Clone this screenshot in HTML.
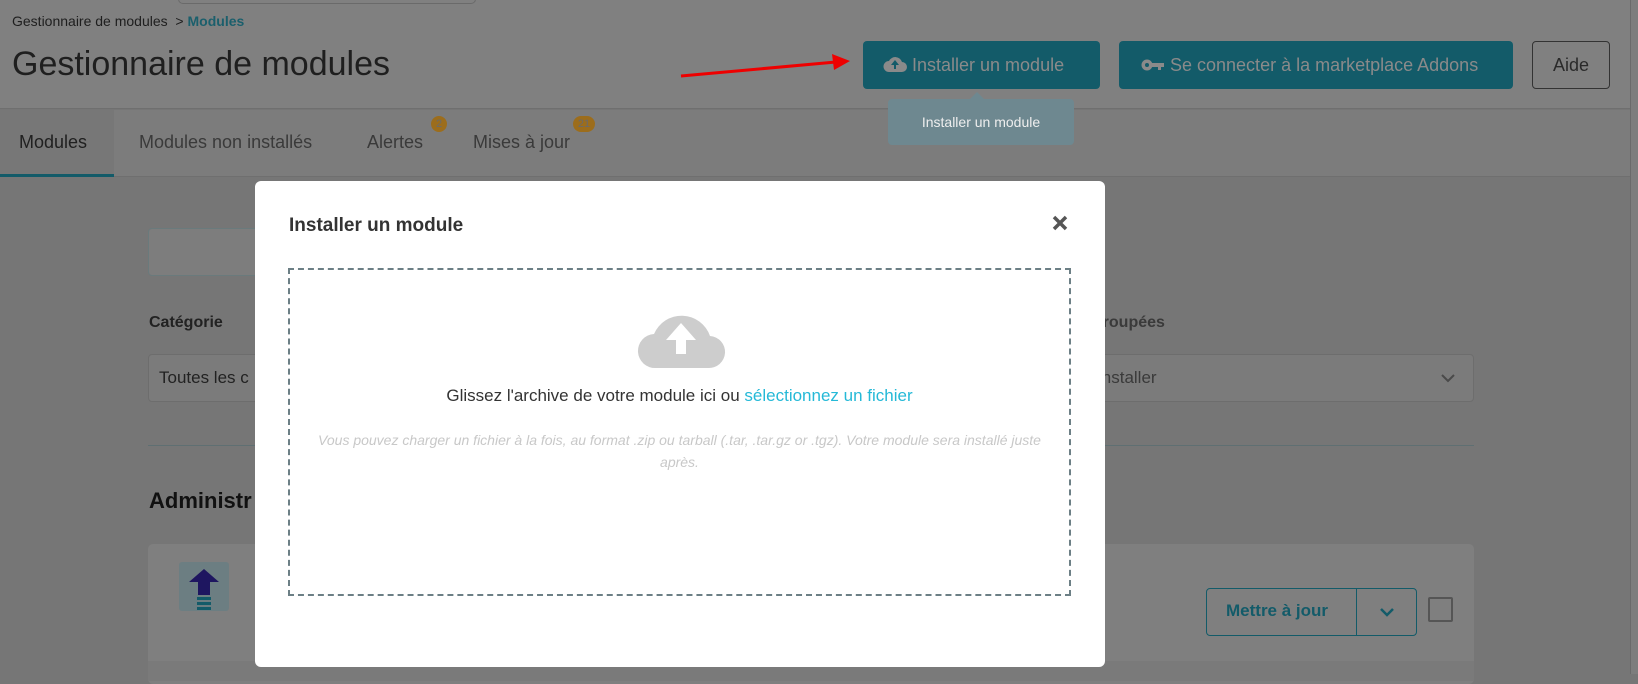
<!DOCTYPE html>
<html><head><meta charset="utf-8"><style>
*{box-sizing:border-box;margin:0;padding:0}
body{width:1638px;height:674px;overflow:hidden;background:#767676;font-family:"Liberation Sans",sans-serif;position:relative}
.a{position:absolute}
</style></head><body>
<!-- header -->
<div class="a" style="left:0;top:0;width:1630px;height:109px;background:#808080;border-bottom:1px solid #6f6f6f"></div>
<div class="a" style="left:178px;top:-6px;width:298px;height:10px;border:1px solid #6a6a6a;border-radius:6px"></div>
<div class="a" style="left:12px;top:13px;font-size:14px;color:#1e1e1e">Gestionnaire de modules &nbsp;&gt; <span style="color:#1b5f6c;font-weight:bold">Modules</span></div>
<div class="a" style="left:12px;top:45px;font-size:34px;color:#1f1f1f">Gestionnaire de modules</div>
<!-- arrow -->
<svg class="a" style="left:0;top:0" width="900" height="120"><line x1="681" y1="76" x2="836" y2="62" stroke="#e00" stroke-width="3"/><polygon points="850,61 832,54 834,70" fill="#e00"/></svg>
<div class="a" style="left:863px;top:41px;width:237px;height:48px;background:#135b69;border-radius:4px;color:#8a8a8a;font-size:18px;line-height:48px;padding-left:20px">
<svg width="24" height="18" viewBox="0 0 24 18" style="vertical-align:-2px"><path d="M6 17h13a5 5 0 0 0 0-10 7 7 0 0 0-13-1A5.5 5.5 0 0 0 6 17z" fill="#8a8a8a"/><path d="M12 5l-4 5h3v4h2v-4h3z" fill="#135b69"/></svg> Installer un module</div>
<div class="a" style="left:1119px;top:41px;width:394px;height:48px;background:#135b69;border-radius:4px;color:#8a8a8a;font-size:18px;line-height:48px;padding-left:22px">
<svg width="24" height="14" viewBox="0 0 24 14" style="vertical-align:-1px"><circle cx="6" cy="7" r="5.5" fill="#8a8a8a"/><circle cx="6" cy="7" r="2" fill="#135b69"/><rect x="10" y="5" width="13" height="4" fill="#8a8a8a"/><rect x="17" y="8" width="3" height="4" fill="#8a8a8a"/></svg> Se connecter à la marketplace Addons</div>
<div class="a" style="left:1532px;top:41px;width:78px;height:48px;border:1px solid #333;border-radius:4px;color:#2a2a2a;font-size:18px;line-height:46px;text-align:center">Aide</div>
<!-- tabs -->
<div class="a" style="left:0;top:110px;width:1630px;height:67px;background:#7c7c7c;border-bottom:1px solid #6f6f6f"></div>
<div class="a" style="left:0;top:110px;width:114px;height:67px;background:#777;border-bottom:3px solid #135b69"></div>
<div class="a" style="left:19px;top:132px;font-size:18px;color:#202020">Modules</div>
<div class="a" style="left:139px;top:132px;font-size:18px;color:#3a3a3a">Modules non installés</div>
<div class="a" style="left:367px;top:132px;font-size:18px;color:#3a3a3a">Alertes</div>
<div class="a" style="left:473px;top:132px;font-size:18px;color:#3a3a3a">Mises à jour</div>
<div class="a" style="left:431px;top:116px;width:16px;height:16px;border-radius:8px;background:#9c6d1c;color:#6a6a6a;font-size:11px;line-height:16px;text-align:center">2</div>
<div class="a" style="left:573px;top:116px;width:22px;height:16px;border-radius:8px;background:#9c6d1c;color:#6a6a6a;font-size:11px;line-height:16px;text-align:center">21</div>
<!-- tooltip -->
<div class="a" style="left:888px;top:99px;width:186px;height:46px;background:#6e8890;border-radius:4px;color:#eee;font-size:14px;line-height:46px;text-align:center">Installer un module</div>
<div class="a" style="left:970px;top:92px;width:0;height:0;border-left:7px solid transparent;border-right:7px solid transparent;border-bottom:7px solid #6e8890"></div>
<div class="a" style="left:1630px;top:0;width:8px;height:674px;background:#7d7d7d;border-left:1px solid #6a6a6a"></div>
<!-- page bg content -->
<div class="a" style="left:148px;top:228px;width:200px;height:48px;border:1px solid #6a7a7c;border-radius:4px;background:#7d7d7d"></div>
<div class="a" style="left:149px;top:314px;font-size:16px;font-weight:bold;color:#222">Catégorie</div>
<div class="a" style="left:148px;top:354px;width:200px;height:48px;border:1px solid #6d6d6d;border-radius:4px;background:#7b7b7b;font-size:17px;color:#222;padding:13px 10px">Toutes les c</div>
<div class="a" style="left:1060px;top:314px;font-size:16px;font-weight:bold;color:#3a3a3a">ons groupées</div>
<div class="a" style="left:1000px;top:354px;width:474px;height:48px;border:1px solid #6d6d6d;border-radius:4px;background:#7b7b7b;font-size:17px;color:#3a3a3a;padding:13px 100px 13px 97px">installer</div>
<svg class="a" style="left:1440px;top:372px" width="16" height="12"><path d="M2 3l6 6 6-6" stroke="#4a4a4a" stroke-width="2" fill="none"/></svg>
<div class="a" style="left:148px;top:445px;width:1326px;height:1px;background:#5f6f72"></div>
<div class="a" style="left:149px;top:488px;font-size:22px;font-weight:bold;color:#111">Administr</div>
<div class="a" style="left:148px;top:544px;width:1326px;height:140px;background:#7f7f7f;border-radius:5px"></div>
<div class="a" style="left:148px;top:661px;width:1326px;height:20px;background:#7a7a7a"></div>
<div class="a" style="left:179px;top:562px;width:50px;height:49px;background:#6c7e82;border-radius:3px"></div>
<svg class="a" style="left:179px;top:562px" width="50" height="49"><polygon points="25,7 40,20 31,20 31,33 19,33 19,20 10,20" fill="#1e1660"/><rect x="18" y="35" width="14" height="3" fill="#135b69"/><rect x="18" y="40" width="14" height="3" fill="#135b69"/><rect x="18" y="45" width="14" height="3" fill="#135b69"/></svg>
<div class="a" style="left:1206px;top:588px;width:211px;height:48px;border:1px solid #135b69;border-radius:4px"></div>
<div class="a" style="left:1356px;top:588px;width:1px;height:48px;background:#135b69"></div>
<div class="a" style="left:1226px;top:601px;font-size:17px;color:#135b69;font-weight:bold">Mettre à jour</div>
<svg class="a" style="left:1379px;top:606px" width="16" height="12"><path d="M2 3l6 6 6-6" stroke="#135b69" stroke-width="2.5" fill="none"/></svg>
<div class="a" style="left:1428px;top:597px;width:25px;height:25px;border:2px solid #555;border-radius:2px"></div>
<!-- modal -->
<div class="a" style="left:255px;top:181px;width:850px;height:486px;background:#fff;border-radius:6px"></div>
<div class="a" style="left:289px;top:215px;font-size:19px;font-weight:bold;color:#333">Installer un module</div>
<svg class="a" style="left:1051px;top:214px" width="18" height="18"><path d="M3 3l12 12M15 3L3 15" stroke="#555" stroke-width="3.5"/></svg>
<div class="a" style="left:288px;top:268px;width:783px;height:328px;border:2px dashed #6c7f85"></div>
<svg class="a" style="left:636px;top:308px" width="90" height="62" viewBox="0 0 90 62"><path d="M20 60h52a16 16 0 0 0 2-32 30 30 0 0 0-56-2A17 17 0 0 0 20 60z" fill="#cdcdcd"/><path d="M45 15l-15 17h10v14h10V32h10z" fill="#fff"/></svg>
<div class="a" style="left:288px;top:386px;width:783px;text-align:center;font-size:17px;color:#333">Glissez l'archive de votre module ici ou <span style="color:#25b9d7">sélectionnez un fichier</span></div>
<div class="a" style="left:318px;top:429px;width:723px;text-align:center;font-size:14px;line-height:22px;color:#c8c8c8;font-style:italic">Vous pouvez charger un fichier à la fois, au format .zip ou tarball (.tar, .tar.gz or .tgz). Votre module sera installé juste après.</div>
</body></html>
